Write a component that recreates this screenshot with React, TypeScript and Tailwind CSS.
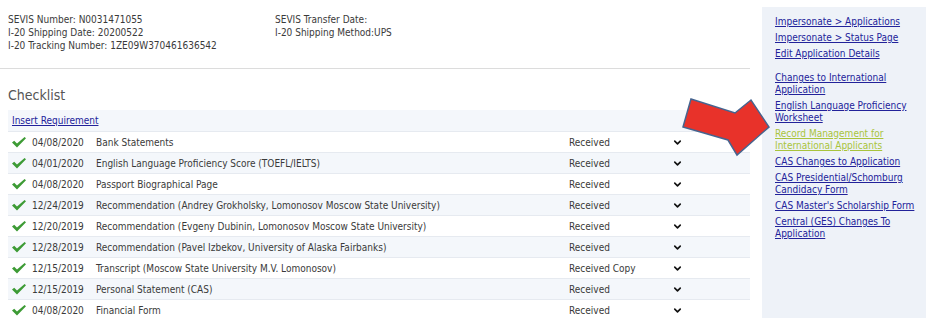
import { ChevronDown } from 'lucide-react'

const rows = [
  { date: '04/08/2020', name: 'Bank Statements', status: 'Received' },
  { date: '04/01/2020', name: 'English Language Proficiency Score (TOEFL/IELTS)', status: 'Received' },
  { date: '04/08/2020', name: 'Passport Biographical Page', status: 'Received' },
  { date: '12/24/2019', name: 'Recommendation (Andrey Grokholsky, Lomonosov Moscow State University)', status: 'Received' },
  { date: '12/20/2019', name: 'Recommendation (Evgeny Dubinin, Lomonosov Moscow State University)', status: 'Received' },
  { date: '12/28/2019', name: 'Recommendation (Pavel Izbekov, University of Alaska Fairbanks)', status: 'Received' },
  { date: '12/15/2019', name: 'Transcript (Moscow State University M.V. Lomonosov)', status: 'Received Copy' },
  { date: '12/15/2019', name: 'Personal Statement (CAS)', status: 'Received' },
  { date: '04/08/2020', name: 'Financial Form', status: 'Received' },
]

const links: { lines: string[]; highlight?: boolean; gap?: boolean }[] = [
  { lines: ['Impersonate > Applications'] },
  { lines: ['Impersonate > Status Page'] },
  { lines: ['Edit Application Details'] },
  { lines: ['Changes to International', 'Application'], gap: true },
  { lines: ['English Language Proficiency', 'Worksheet'] },
  { lines: ['Record Management for', 'International Applicants'], highlight: true },
  { lines: ['CAS Changes to Application'] },
  { lines: ['CAS Presidential/Schomburg', 'Candidacy Form'] },
  { lines: ["CAS Master's Scholarship Form"] },
  { lines: ['Central (GES) Changes To', 'Application'] },
]

function Check() {
  return (
    <svg width="14" height="11" viewBox="0 0 14 11" className="shrink-0">
      <polygon points="0,5.5 2.2,3.8 5,6.6 12.6,0 14,1.3 5,10.5" fill="#3d9b35" />
    </svg>
  )
}

export default function App() {
  return (
    <div
      className="relative w-[926px] h-[318px] overflow-hidden bg-white flex text-[10px] text-[#3a3a3a]"
      style={{ fontFamily: '"DejaVu Sans Condensed", "DejaVu Sans", Verdana, sans-serif', fontStretch: 'condensed' }}
    >
      <div className="w-[762px] shrink-0">
        <div className="flex pl-2 pt-[13px] leading-[13px] h-[68px]">
          <div className="w-[267px]">
            <div>SEVIS Number: N0031471055</div>
            <div>I-20 Shipping Date: 20200522</div>
            <div>I-20 Tracking Number: 1ZE09W370461636542</div>
          </div>
          <div>
            <div>SEVIS Transfer Date:</div>
            <div>I-20 Shipping Method:UPS</div>
          </div>
        </div>
        <div className="w-[750px] h-px bg-[#dcdcdc]" />
        <div className="pl-2 pt-[17px] h-[41px] text-[14px] leading-[18px] text-[#555]">Checklist</div>
        <div className="ml-2 w-[742px]">
          <div className="h-[21px] flex items-center pl-1 bg-[#f4f7fb]">
            <a href="#" className="text-[#22229a] underline">Insert Requirement</a>
          </div>
          {rows.map((r, i) => (
            <div
              key={i}
              className={`h-[21px] flex items-center border-t border-[#e6eaf0] ${i % 2 === 1 ? 'bg-[#f4f7fb]' : 'bg-white'}`}
            >
              <div className="w-[24px] pl-1 flex items-center">
                <Check />
              </div>
              <div className="w-[64px]">{r.date}</div>
              <div className="w-[473px] whitespace-nowrap">{r.name}</div>
              <div className="w-[103px]">{r.status}</div>
              <ChevronDown size={11} strokeWidth={3.5} color="#111" />
            </div>
          ))}
        </div>
      </div>
      <div className="flex-1 mt-[7px] bg-[#eef2f8] pl-[13px] pt-[9px]">
        {links.map((l, i) => (
          <div key={i} className={`${l.gap ? 'mt-[12px]' : i === 0 ? '' : 'mt-[4px]'} leading-[12px]`}>
            <a
              href="#"
              className={`underline text-[10px] ${l.highlight ? 'text-[#a9c43c]' : 'text-[#22229a]'}`}
            >
              {l.lines.map((t, j) => (
                <div key={j}>{t}</div>
              ))}
            </a>
          </div>
        ))}
      </div>
      <svg className="absolute left-0 top-0 pointer-events-none" width="926" height="318">
        <polygon
          points="691,99 735,113 751,100 769,127 737,155 728,140 683,127"
          fill="#e8322a"
          stroke="#46648f"
          strokeWidth="1.5"
          strokeLinejoin="miter"
        />
      </svg>
    </div>
  )
}
